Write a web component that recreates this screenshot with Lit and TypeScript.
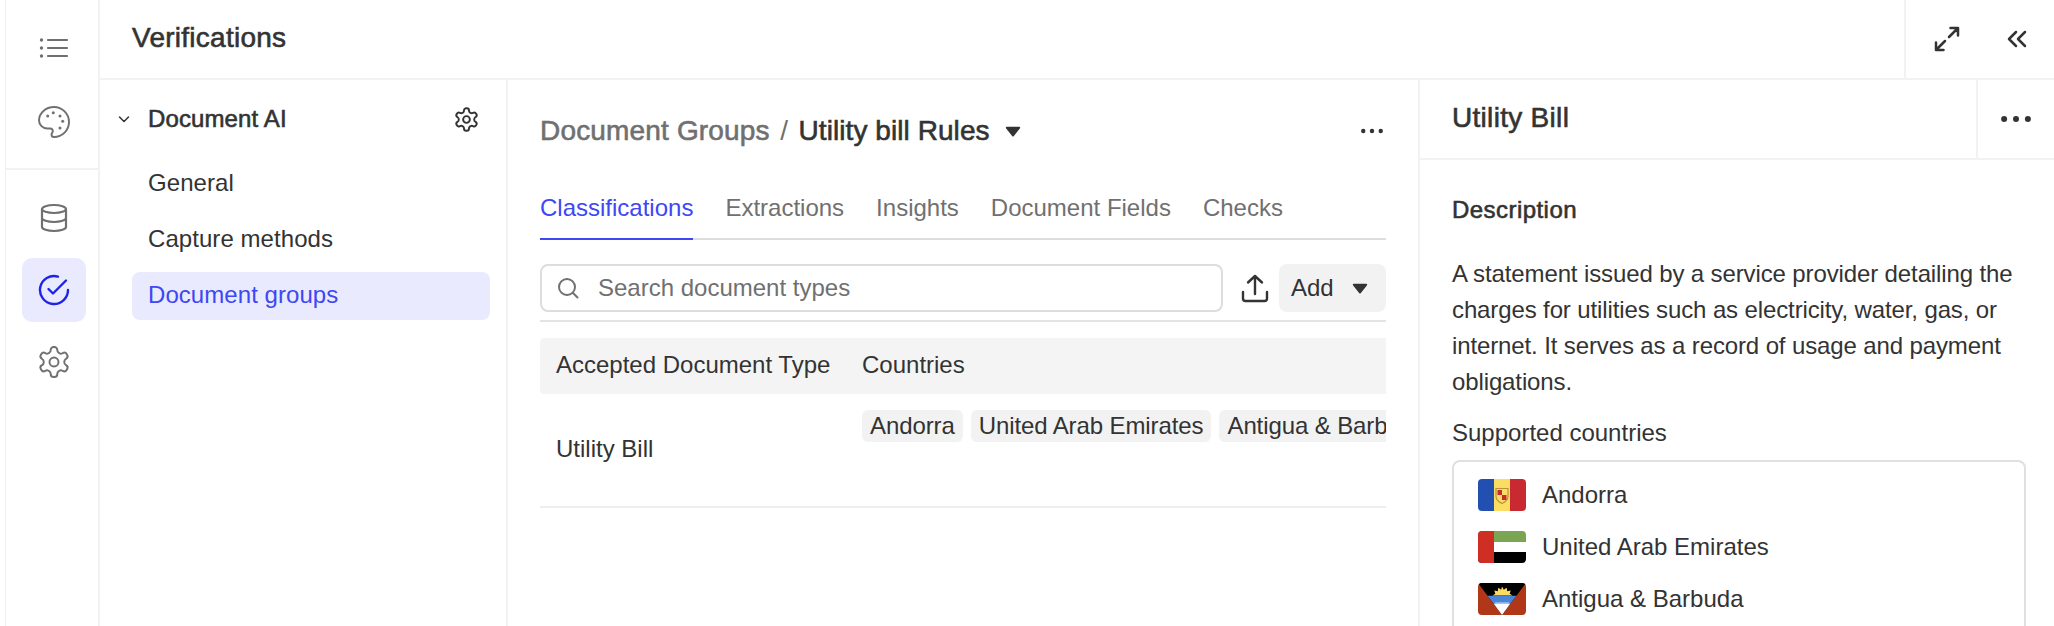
import { LitElement, html, css, svg } from "lit";
import { customElement } from "lit/decorators.js";

const gearPath = "M12.22 2h-.44a2 2 0 0 0-2 2v.18a2 2 0 0 1-1 1.73l-.43.25a2 2 0 0 1-2 0l-.15-.08a2 2 0 0 0-2.73.73l-.22.38a2 2 0 0 0 .73 2.73l.15.1a2 2 0 0 1 1 1.72v.51a2 2 0 0 1-1 1.74l-.15.09a2 2 0 0 0-.73 2.73l.22.38a2 2 0 0 0 2.73.73l.15-.08a2 2 0 0 1 2 0l.43.25a2 2 0 0 1 1 1.73V20a2 2 0 0 0 2 2h.44a2 2 0 0 0 2-2v-.18a2 2 0 0 1 1-1.73l.43-.25a2 2 0 0 1 2 0l.15.08a2 2 0 0 0 2.73-.73l.22-.39a2 2 0 0 0-.73-2.73l-.15-.08a2 2 0 0 1-1-1.74v-.5a2 2 0 0 1 1-1.74l.15-.09a2 2 0 0 0 .73-2.73l-.22-.38a2 2 0 0 0-2.73-.73l-.15.08a2 2 0 0 1-2 0l-.43-.25a2 2 0 0 1-1-1.73V4a2 2 0 0 0-2-2z";

const gear = (size: number, sw: number) => html`<svg width=${size} height=${size} viewBox="0 0 24 24" fill="none" stroke="currentColor" stroke-width=${sw} stroke-linecap="round" stroke-linejoin="round"><path d=${gearPath}></path><circle cx="12" cy="12" r="3"></circle></svg>`;

const caret = () => html`<svg width="16" height="11" viewBox="0 0 18 13"><path d="M1.500 1h15a1 1 0 0 1 .8 1.600l-7.500 9.400a1 1 0 0 1-1.600 0L.7 2.600A1 1 0 0 1 1.500 1z" fill="#333"></path></svg>`;

const dots = (size: number) => html`<svg width=${size} height=${size} viewBox="0 0 24 24" fill="currentColor"><circle cx="4.500" cy="12" r="1.900"></circle><circle cx="12" cy="12" r="1.900"></circle><circle cx="19.500" cy="12" r="1.900"></circle></svg>`;

const flagAndorra = svg`<rect width="16" height="32" fill="#2150b0"></rect><rect x="16" width="16" height="32" fill="#fcdd63"></rect><rect x="32" width="16" height="32" fill="#c92a32"></rect>
<path d="M18 9.500h12v8c0 3.500-3 5.500-6 7-3-1.500-6-3.500-6-7z" fill="#fcdd63" stroke="#b8923a" stroke-width="1.200"></path><rect x="19.500" y="11" width="4.500" height="5" fill="#c92a32"></rect><rect x="24" y="16" width="4.500" height="5" fill="#c92a32"></rect>`;
const flagUae = svg`<rect width="48" height="11" fill="#7ba453"></rect><rect y="11" width="48" height="10" fill="#fff"></rect><rect y="21" width="48" height="11" fill="#000"></rect><rect width="16" height="32" fill="#cf2e25"></rect>`;
const flagAntigua = svg`<rect width="48" height="32" fill="#b03718"></rect><path d="M0 0h48L24 32z" fill="#000"></path><path d="M24 3.500l1.800 3.300 2.900-2 .5 3.400 3.500-.7-1 3.200 2.800 1.800H14.500l2.800-1.800-1-3.200 3.500.7.5-3.400 2.900 2z" fill="#fcdd63"></path><path d="M9.500 12.700h29L32.500 20.600h-17z" fill="#4a86d8"></path><path d="M16.500 19.300h15l-1 1.300h-13z" fill="#9cc0ee"></path><path d="M15.500 20.600h17L24 32z" fill="#fff"></path>`;

const flag = (content: unknown) => html`<svg class="flag" width="48" height="32" viewBox="0 0 48 32">${content}</svg>`;

@customElement("app-root")
export class AppRoot extends LitElement {
  static styles = css`
    :host { display: block; height: 626px; overflow: hidden; background: #fff; color: #333; font-family: "Liberation Sans", Arial, sans-serif; font-size: 24px; }
    * { box-sizing: border-box; }
    .app { display: flex; height: 626px; padding-left: 5px; }
    .rail { width: 95px; flex: none; border-left: 1px solid #f0f0f0; border-right: 2px solid #f2f2f2; color: #707070; display: flex; flex-direction: column; }
    .rail-top { height: 170px; border-bottom: 2px solid #f2f2f2; display: flex; flex-direction: column; align-items: center; padding: 30px 0 0 3px; gap: 38px; flex: none; }
    .rail-bottom { display: flex; flex-direction: column; align-items: center; padding: 16px 0 0 3px; }
    .rail-btn { width: 64px; height: 64px; border-radius: 10px; display: flex; align-items: center; justify-content: center; flex: none; }
    .rail-top .rail-btn { height: 36px; }
    .rail-bottom .rail-btn.active { background: #e9eafd; color: #1d24ea; margin: 8px 0; }
    .content { flex: 1; min-width: 0; display: flex; flex-direction: column; }
    .topbar { height: 80px; flex: none; border-bottom: 2px solid #f2f2f2; display: flex; align-items: stretch; }
    .med { -webkit-text-stroke: 0.6px currentColor; }
    .title { flex: 1; font-size: 28px; letter-spacing: 0.26px; padding-left: 32px; line-height: 76px; }
    .top-actions { width: 150px; border-left: 2px solid #f2f2f2; display: flex; align-items: center; justify-content: space-between; padding: 0 27px 0 28px; }
    .body { flex: 1; display: flex; min-height: 0; }
    .nav { width: 408px; flex: none; border-right: 2px solid #f2f2f2; padding: 18px 16px 0 16px; }
    .nav-head { display: flex; align-items: center; height: 42px; color: #333; }
    .nav-head .chev { width: 32px; padding-left: 2px; display: flex; flex: none; }
    .nav-head .label { flex: 1; letter-spacing: 0.12px; }
    .nav-head .gear { display: flex; margin-right: 10px; }
    .nav-items { display: flex; flex-direction: column; margin: 20px 0 0 16px; }
    .nav-item { height: 48px; margin-bottom: 8px; padding: 0 0 2px 16px; display: flex; align-items: center; border-radius: 8px; letter-spacing: 0.06px; }
    .nav-item.active { background: #e9eafd; color: #3d47f5; }
    .main { width: 912px; flex: none; border-right: 2px solid #f2f2f2; padding: 28px 32px 0; overflow: hidden; }
    .crumbs { display: flex; align-items: center; height: 46px; font-size: 28px; }
    .crumbs .muted { color: #707070; letter-spacing: 0.17px; }
    .crumbs .current { letter-spacing: 0.07px; }
    .crumbs .sep { color: #707070; margin: 0 10.5px; }
    .crumbs .caret { display: flex; margin-left: 15px; }
    .crumbs .more { margin-left: auto; display: flex; color: #333; }
    .tabs { display: flex; gap: 32px; margin-top: 28px; height: 58px; border-bottom: 2px solid #ddd; color: #707070; }
    .tab { height: 58px; padding-top: 10px; line-height: 32px; }
    .tab.active { color: #3d47f5; border-bottom: 2px solid #3d47f5; }
    .tools { display: flex; align-items: center; margin-top: 24px; height: 48px; }
    .search { width: 683px; height: 48px; border: 2px solid #ddd; border-radius: 8px; display: flex; align-items: center; padding-left: 14px; gap: 18px; color: #707070; }
    .upload { flex: 1; display: flex; justify-content: center; padding-left: 8px; color: #333; }
    .add { width: 107px; height: 48px; background: #f2f2f2; border-radius: 8px; display: flex; align-items: center; justify-content: space-between; padding: 0 18px 0 12px; }
    .rule { height: 2px; background: #e4e4e4; margin-top: 8px; }
    .thead { display: flex; align-items: center; height: 56px; margin-top: 16px; padding-bottom: 2px; background: #f4f4f4; border-radius: 4px 0 0 4px; }
    .col1 { width: 322px; padding-left: 16px; flex: none; }
    .trow { display: flex; height: 114px; border-bottom: 2px solid #eee; }
    .trow .col1 { display: flex; align-items: center; padding-bottom: 2px; }
    .chips { flex: 1; min-width: 0; overflow: hidden; display: flex; gap: 8px; padding-top: 16px; align-items: flex-start; }
    .chip { flex: none; height: 32px; line-height: 31px; padding: 0 8px; background: #f2f2f2; border-radius: 6px; white-space: nowrap; letter-spacing: -0.1px; }
    .detail { flex: 1; min-width: 0; display: flex; flex-direction: column; }
    .detail-head { height: 80px; flex: none; border-bottom: 2px solid #f2f2f2; display: flex; align-items: stretch; }
    .detail-title { flex: 1; padding-left: 32px; font-size: 28px; letter-spacing: 0.3px; line-height: 76px; }
    .detail-more { width: 78px; border-left: 2px solid #f2f2f2; display: flex; align-items: center; justify-content: center; color: #333; }
    .detail-body { padding: 34px 28px 0 32px; }
    .h { letter-spacing: 0.45px; line-height: 32px; }
    .p { margin: 30px 0 0; line-height: 36px; letter-spacing: -0.12px; }
    .sub { line-height: 36px; margin-top: 15px; }
    .box { margin-top: 9px; border: 2px solid #e0e0e0; border-radius: 8px; padding: 17px 24px; height: 300px; display: flex; flex-direction: column; gap: 20px; }
    .country { display: flex; align-items: center; gap: 16px; height: 32px; }
    .flag { border-radius: 4px; flex: none; }
  `;

  render() {
    return html`<div class="app">
      <div class="rail">
        <div class="rail-top">
          <div class="rail-btn"><svg width="30" height="30" viewBox="0 0 30 30" fill="none" stroke="currentColor" stroke-width="2.200" stroke-linecap="round"><path d="M9 7h19M9 15h19M9 23h19"></path><circle cx="2.500" cy="7" r="1.700" fill="currentColor" stroke="none"></circle><circle cx="2.500" cy="15" r="1.700" fill="currentColor" stroke="none"></circle><circle cx="2.500" cy="23" r="1.700" fill="currentColor" stroke="none"></circle></svg></div>
          <div class="rail-btn"><svg width="36" height="36" viewBox="0 0 24 24" fill="none" stroke="currentColor" stroke-width="1.300" stroke-linejoin="round"><path transform="translate(24 0) scale(-1 1)" d="M12 2C6.500 2 2 6.500 2 12s4.500 10 10 10c.926 0 1.648-.746 1.648-1.688 0-.437-.18-.835-.437-1.125-.29-.289-.438-.652-.438-1.125a1.640 1.640 0 0 1 1.668-1.668h1.996c3.051 0 5.555-2.503 5.555-5.554C21.965 6.012 17.461 2 12 2z"></path><g fill="currentColor" stroke="none"><circle cx="7.800" cy="8" r="1"></circle><circle cx="11.500" cy="5.800" r="1"></circle><circle cx="16" cy="8" r="1"></circle><circle cx="17.800" cy="11.500" r="1"></circle><circle cx="16" cy="16" r="1"></circle></g></svg></div>
        </div>
        <div class="rail-bottom">
          <div class="rail-btn"><svg width="30" height="30" viewBox="0 0 30 30" fill="none" stroke="currentColor" stroke-width="2.200"><ellipse cx="15" cy="6" rx="12" ry="4"></ellipse><path d="M3 6v18c0 2.200 5.400 4 12 4s12-1.800 12-4V6M3 15c0 2.200 5.400 4 12 4s12-1.800 12-4"></path></svg></div>
          <div class="rail-btn active"><svg width="32" height="32" viewBox="0 0 32 32" fill="none" stroke="currentColor" stroke-width="2.400" stroke-linecap="round" stroke-linejoin="round"><path d="M30 16A14 14 0 1 1 20 2.600"></path><path d="M10.500 15l4.500 4.500L28 6.500"></path></svg></div>
          <div class="rail-btn">${gear(36, 1.300)}</div>
        </div>
      </div>
      <div class="content">
        <div class="topbar">
          <div class="title med">Verifications</div>
          <div class="top-actions">
            <svg width="26" height="26" viewBox="0 0 26 26" fill="none" stroke="#333" stroke-width="2.500" stroke-linecap="round" stroke-linejoin="round"><path d="M15 11l9-9M16.500 2H24v7.500M11 15l-9 9M2 16.500V24h7.500"></path></svg>
            <svg width="20" height="18" viewBox="0 0 20 18" fill="none" stroke="#333" stroke-width="2.500" stroke-linecap="round" stroke-linejoin="round"><path d="M9 2L2 9l7 7M18 2l-7 7 7 7"></path></svg>
          </div>
        </div>
        <div class="body">
          <div class="nav">
            <div class="nav-head">
              <span class="chev"><svg width="12" height="10" viewBox="0 0 12 10" fill="none" stroke="#333" stroke-width="1.500" stroke-linecap="round" stroke-linejoin="round"><path d="M1.500 3l4.500 4.500L10.500 3"></path></svg></span>
              <span class="label med">Document AI</span>
              <span class="gear">${gear(27, 1.700)}</span>
            </div>
            <div class="nav-items">
              <div class="nav-item">General</div>
              <div class="nav-item">Capture methods</div>
              <div class="nav-item active">Document groups</div>
            </div>
          </div>
          <div class="main">
            <div class="crumbs">
              <span class="muted med">Document Groups</span><span class="sep">/</span><span class="current med">Utility bill Rules</span>
              <span class="caret">${caret()}</span>
              <span class="more">${dots(28)}</span>
            </div>
            <div class="tabs">
              <div class="tab active">Classifications</div>
              <div class="tab">Extractions</div>
              <div class="tab">Insights</div>
              <div class="tab">Document Fields</div>
              <div class="tab">Checks</div>
            </div>
            <div class="tools">
              <div class="search">
                <svg width="24" height="24" viewBox="0 0 24 24" fill="none" stroke="#707070" stroke-width="2" stroke-linecap="round"><circle cx="11" cy="11" r="8"></circle><path d="M17 17l4.500 4.500"></path></svg>
                <span>Search document types</span>
              </div>
              <div class="upload"><svg width="30" height="30" viewBox="0 0 30 30" fill="none" stroke="#333" stroke-width="2.400" stroke-linecap="round" stroke-linejoin="round"><path d="M15 21V3M8 9.500L15 3l7 6.500M3 19v6.500a2.500 2.500 0 0 0 2.500 2.500h19a2.500 2.500 0 0 0 2.500-2.500V19"></path></svg></div>
              <div class="add"><span>Add</span>${caret()}</div>
            </div>
            <div class="rule"></div>
            <div class="thead"><div class="col1">Accepted Document Type</div><div>Countries</div></div>
            <div class="trow">
              <div class="col1">Utility Bill</div>
              <div class="chips"><span class="chip">Andorra</span><span class="chip">United Arab Emirates</span><span class="chip">Antigua &amp; Barbuda</span></div>
            </div>
          </div>
          <div class="detail">
            <div class="detail-head"><div class="detail-title med">Utility Bill</div><div class="detail-more">${dots(38)}</div></div>
            <div class="detail-body">
              <div class="h med">Description</div>
              <p class="p">A statement issued by a service provider detailing the charges for utilities such as electricity, water, gas, or internet. It serves as a record of usage and payment obligations.</p>
              <div class="sub">Supported countries</div>
              <div class="box">
                <div class="country">${flag(flagAndorra)}<span>Andorra</span></div>
                <div class="country">${flag(flagUae)}<span>United Arab Emirates</span></div>
                <div class="country">${flag(flagAntigua)}<span>Antigua &amp; Barbuda</span></div>
              </div>
            </div>
          </div>
        </div>
      </div>
    </div>`;
  }
}
